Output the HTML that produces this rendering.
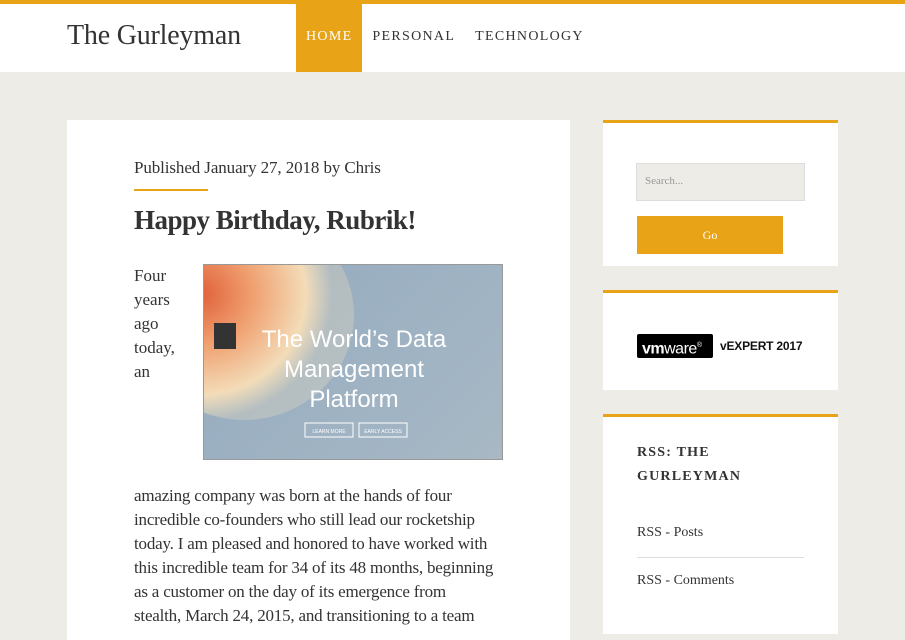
<!DOCTYPE html>
<html><head><meta charset="utf-8"><style>
*{margin:0;padding:0;box-sizing:border-box}
body{width:905px;height:620px;overflow:hidden;background:#edece7;font-family:"Liberation Serif",serif;color:#333;position:relative}
.hdr{position:absolute;left:0;top:0;width:905px;height:72px;background:#fff;border-top:4px solid #e8a317}
.logo{position:absolute;left:67px;top:16px;font-size:28px;color:#333;letter-spacing:-0.2px}
.nav{position:absolute;left:296px;top:0;height:68px;display:flex}
.nav a{display:block;height:68px;line-height:66px;padding:0 10px;font-size:14px;letter-spacing:1.3px;color:#333;text-decoration:none}
.nav a.on{background:#e8a317;color:#fff}
.main{position:absolute;left:67px;top:120px;width:503px;height:520px;background:#fff}
.meta{position:absolute;left:67px;top:38px;font-size:17px;letter-spacing:-0.1px}
.line{position:absolute;left:67px;top:69px;width:74px;height:2px;background:#e8a317}
h1{position:absolute;left:67px;top:85px;font-size:27px;font-weight:bold;letter-spacing:-0.5px;white-space:nowrap}
.txt{position:absolute;font-size:17px;line-height:24px;white-space:nowrap}
.img{position:absolute;left:136px;top:144px;width:300px;height:196px;border:1px solid #999;overflow:hidden;background:linear-gradient(135deg,#93a9bd,#9fb3c3 60%,#a8b8c4)}
.side{position:absolute;left:603px;width:235px;background:#fff;border-top:3px solid #e8a317}
</style></head><body>
<div class="hdr"><div class="logo">The Gurleyman</div>
<div class="nav"><a class="on">HOME</a><a>PERSONAL</a><a>TECHNOLOGY</a></div></div>
<div class="main">
<div class="meta">Published January 27, 2018 by Chris</div>
<div class="line"></div>
<h1>Happy Birthday, Rubrik!</h1>
<div class="txt" style="left:67px;top:144px">Four<br>years<br>ago<br>today,<br>an</div>
<div class="img">
<svg width="300" height="196" style="position:absolute;left:0;top:0">
<defs><radialGradient id="g" cx="0.3" cy="0.4" r="0.6"><stop offset="0" stop-color="#e0603a"/><stop offset="0.4" stop-color="#f0a070"/><stop offset="0.8" stop-color="#f3dcb8"/><stop offset="1" stop-color="#f0e0c0" stop-opacity="0.3"/></radialGradient></defs>
<ellipse cx="40" cy="50" rx="110" ry="105" fill="url(#g)"/>
<rect x="10" y="58" width="22" height="26" fill="#333"/>
<text x="150" y="82" fill="#fff" font-family="Liberation Sans,sans-serif" font-size="24" text-anchor="middle">The World’s Data</text>
<text x="150" y="112" fill="#fff" font-family="Liberation Sans,sans-serif" font-size="24" text-anchor="middle">Management</text>
<text x="150" y="142" fill="#fff" font-family="Liberation Sans,sans-serif" font-size="24" text-anchor="middle">Platform</text>
<rect x="101" y="158" width="48" height="14" fill="none" stroke="#fff"/><rect x="155" y="158" width="48" height="14" fill="none" stroke="#fff"/>
<text x="125" y="168" fill="#fff" font-size="5" font-family="Liberation Sans" text-anchor="middle">LEARN MORE</text>
<text x="179" y="168" fill="#fff" font-size="5" font-family="Liberation Sans" text-anchor="middle">EARLY ACCESS</text>
</svg></div>
<div class="txt" style="left:67px;top:364px;letter-spacing:-0.2px">amazing company was born at the hands of four<br>incredible co-founders who still lead our rocketship<br>today. I am pleased and honored to have worked with<br>this incredible team for 34 of its 48 months, beginning<br>as a customer on the day of its emergence from<br>stealth, March 24, 2015, and transitioning to a team</div>
</div>
<div class="side" style="top:120px;height:146px">
<div style="position:absolute;left:33px;top:40px;width:169px;height:38px;background:#edece7;border:1px solid #ddd;font-size:11px;color:#999;padding:11px 8px">Search...</div>
<div style="position:absolute;left:34px;top:93px;width:146px;height:38px;background:#e8a317;color:#fff;font-size:12px;text-align:center;line-height:38px">Go</div>
</div>
<div class="side" style="top:290px;height:100px">
<div style="position:absolute;left:34px;top:41px;width:76px;height:24px;background:#000;border-radius:2px;color:#fff;font-family:'Liberation Sans',sans-serif;font-size:16px;line-height:23px;padding-left:5px;letter-spacing:-0.5px"><b>vm</b>ware<sup style="font-size:7px">®</sup></div>
<div style="position:absolute;left:117px;top:46px;font-family:'Liberation Sans',sans-serif;font-size:12px;font-weight:bold;color:#111;letter-spacing:-0.2px">vEXPERT 2017</div>
</div>
<div class="side" style="top:414px;height:220px">
<div style="position:absolute;left:34px;top:24px;font-size:14px;font-weight:bold;letter-spacing:1.2px;line-height:24px">RSS: THE<br>GURLEYMAN</div>
<div style="position:absolute;left:34px;top:108px;font-size:14px">RSS - Posts</div>
<div style="position:absolute;left:34px;top:140px;width:167px;height:1px;background:#ddd"></div>
<div style="position:absolute;left:34px;top:156px;font-size:14px">RSS - Comments</div>
</div>
</body></html>
